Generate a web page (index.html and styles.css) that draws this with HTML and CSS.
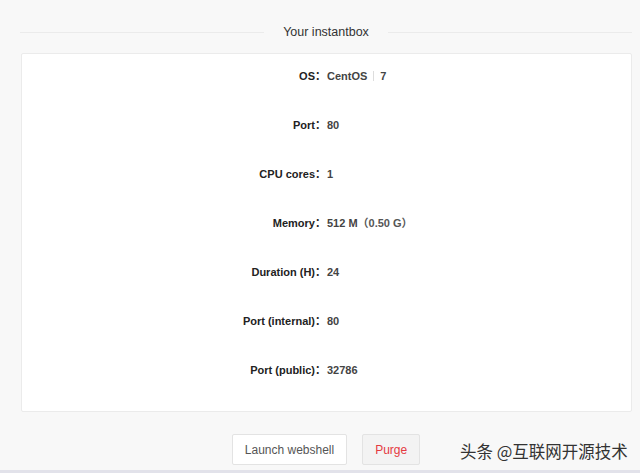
FILE: index.html
```html
<!DOCTYPE html>
<html lang="en">

<head>
    <meta charset="UTF-8">
    <meta name="viewport" content="width=device-width, initial-scale=1.0">
    <title>instantbox</title>
    <link rel="stylesheet" href="styles.css">
</head>

<body>
    <div class="page">
        <div class="divider">
            <span class="divider-line"></span>
            <span class="divider-text">Your instantbox</span>
            <span class="divider-line"></span>
        </div>

        <div class="card">
            <div class="row">
                <div class="label">OS：</div>
                <div class="value">CentOS<span class="sep"></span>7</div>
            </div>
            <div class="row">
                <div class="label">Port：</div>
                <div class="value">80</div>
            </div>
            <div class="row">
                <div class="label">CPU cores：</div>
                <div class="value">1</div>
            </div>
            <div class="row">
                <div class="label">Memory：</div>
                <div class="value">512 M<span class="paren">（0.50 G）</span></div>
            </div>
            <div class="row">
                <div class="label">Duration (H)：</div>
                <div class="value">24</div>
            </div>
            <div class="row">
                <div class="label">Port (internal)：</div>
                <div class="value">80</div>
            </div>
            <div class="row">
                <div class="label">Port (public)：</div>
                <div class="value">32786</div>
            </div>
        </div>

        <div class="actions">
            <button class="btn">Launch webshell</button>
            <button class="btn btn-danger">Purge</button>
        </div>
    </div>
    <div class="bottombar"></div>
    <div class="watermark">头条 @互联网开源技术</div>
</body>

</html>
```

FILE: styles.css
```css
body {
    font-family: 'Liberation Sans', Arial, 'Noto Sans CJK SC', sans-serif;
    background-color: #f8f8f8;
    margin: 0;
    height: 473px;
    overflow: hidden;
    position: relative;
}

.page {
    padding: 22px 8px 0 20px;
}

.divider {
    display: flex;
    align-items: center;
    height: 20px;
}

.divider-line {
    flex: 1;
    height: 1px;
    background-color: #ebebeb;
}

.divider-text {
    padding: 0 19px;
    font-size: 12.5px;
    color: #333;
}

.card {
    margin-top: 11px;
    margin-left: 1px;
    background-color: #fff;
    border: 1px solid #ebebeb;
    border-radius: 2px;
    padding-top: 14px;
}

.row {
    display: flex;
    font-size: 11px;
    font-weight: bold;
    line-height: 16px;
    margin-bottom: 33px;
}

.label {
    flex: 1;
    text-align: right;
    color: #222;
    font-family: 'Liberation Sans', 'Noto Sans CJK SC', sans-serif;
}

.value {
    flex: 1;
    color: #444;
    padding-left: 1px;
    font-family: 'Liberation Sans', 'Noto Sans CJK SC', sans-serif;
}

.sep {
    display: inline-block;
    width: 1px;
    height: 10px;
    background-color: #ddd;
    margin: 0 6px;
    vertical-align: -1px;
}

.paren {
    color: #555;
}

.actions {
    display: flex;
    justify-content: center;
    gap: 15px;
    margin-top: 22px;
}

.btn {
    font-family: 'Liberation Sans', Arial, sans-serif;
    font-size: 12px;
    height: 31px;
    padding: 0 12px;
    border: 1px solid #e3e3e3;
    border-radius: 2px;
    background-color: #fff;
    color: #555;
}

.btn-danger {
    background-color: #f3f3f3;
    color: #e5393f;
}

.bottombar {
    position: absolute;
    left: 0;
    right: 0;
    bottom: 0;
    height: 3px;
    background-color: #e2e2ea;
}

.watermark {
    position: absolute;
    left: 460px;
    top: 440px;
    font-family: 'Noto Sans CJK SC', sans-serif;
    font-size: 16.5px;
    line-height: 22px;
    color: #333;
}
```
